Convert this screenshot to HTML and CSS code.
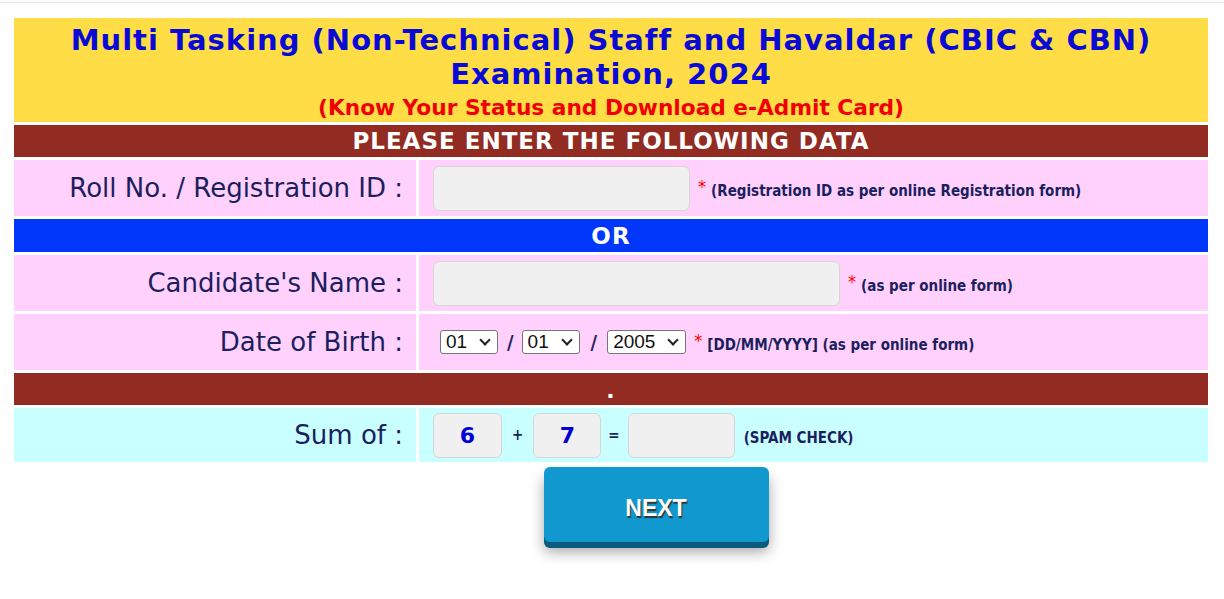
FILE: index.html
```html
<!DOCTYPE html>
<html>
<head>
<meta charset="utf-8">
<link rel="stylesheet" href="styles.css">
</head>
<body>
<div class="topline"></div>
<table class="form">
  <tr>
    <td colspan="2" class="head">
      <div class="title">Multi Tasking (Non-Technical) Staff and Havaldar (CBIC &amp; CBN)<br>Examination, 2024</div>
      <div class="sub">(Know Your Status and Download e-Admit Card)</div>
    </td>
  </tr>
  <tr><td colspan="2" class="bar brown">PLEASE ENTER THE FOLLOWING DATA</td></tr>
  <tr class="pink">
    <td class="label">Roll No. / Registration ID :</td>
    <td class="field"><span class="input w1"></span><span class="star">*</span><span class="hint">(Registration ID as per online Registration form)</span></td>
  </tr>
  <tr><td colspan="2" class="bar blue">OR</td></tr>
  <tr class="pink">
    <td class="label">Candidate's Name :</td>
    <td class="field"><span class="input w2"></span><span class="star">*</span><span class="hint">(as per online form)</span></td>
  </tr>
  <tr class="pink dob">
    <td class="label">Date of Birth :</td>
    <td class="field"><span class="sel s2">01</span><span class="slash">/</span><span class="sel s2">01</span><span class="slash sl2">/</span><span class="sel s4">2005</span><span class="star">*</span><span class="hint">[DD/MM/YYYY] (as per online form)</span></td>
  </tr>
  <tr><td colspan="2" class="bar brown dot">.</td></tr>
  <tr class="cyan">
    <td class="label">Sum of :</td>
    <td class="field"><span class="input num">6</span><span class="op">+</span><span class="input num n2">7</span><span class="op eq">=</span><span class="input w3"></span><span class="hint spam">(SPAM CHECK)</span></td>
  </tr>
</table>
<div class="btnwrap"><button class="next">NEXT</button></div>
</body>
</html>
```
FILE: styles.css
```css
html, body { margin: 0; padding: 0; background: #fff; }
body { font-family: "DejaVu Sans", sans-serif; }
.topline { height: 2px; border-bottom: 1px solid #e4e4e4; }
.form {
  border-collapse: separate;
  border-spacing: 3px;
  width: 1200px;
  margin: 12px 0 0 11px;
}
.form td { padding: 0; }
.head {
  background: #fedd46;
  text-align: center;
  height: 104px;
  vertical-align: top;
}
.title {
  color: #0a0ad6;
  font-weight: bold;
  font-size: 29px;
  letter-spacing: 1px;
  line-height: 34px;
  padding-top: 5px;
}
.sub {
  color: #f00000;
  font-weight: bold;
  font-size: 21.7px;
  line-height: 28px;
  margin-top: 3px;
}
.bar {
  color: #fff;
  font-weight: bold;
  font-size: 23px;
  letter-spacing: 1px;
  text-align: center;
  height: 32px;
  line-height: 32px;
}
.brown { background: #922b22; }
.blue { background: #0037fb; height: 33px; }
.dot { height: 32px; line-height: 28px; font-size: 22px; vertical-align: bottom; }
.pink td { background: #ffd1fc; height: 56px; }
.dob td { height: 56px; }
.cyan td { background: #caffff; height: 54px; }
.label {
  width: 402px;
  text-align: right;
  color: #1b1f5e;
  font-size: 26px;
  padding-right: 13px !important;
  box-sizing: border-box;
}
.field {
  padding-left: 14px !important;
  font-family: "DejaVu Sans Condensed", "DejaVu Sans", sans-serif;
  font-size: 15px;
  color: #1b1f5e;
  white-space: nowrap;
}
.field > span { display: inline-block; vertical-align: middle; }
.input {
  background: #f0f0f0;
  border: 1px solid #d6d6d6;
  border-radius: 6px;
  box-sizing: border-box;
  height: 45px;
}
.w1 { width: 257px; }
.w2 { width: 407px; }
.w3 { width: 107px; }
.num {
  width: 69px;
  text-align: center;
  color: #0000d8;
  font-family: "DejaVu Sans", sans-serif;
  font-weight: bold;
  font-size: 22px;
  line-height: 43px;
}
.star { color: #f00; font-size: 18px; margin: 0 5px 0 8px; padding-bottom: 4px; }
.hint { font-weight: bold; font-size: 15px; padding-top: 5px; }
.sel {
  font-family: "Liberation Sans", Arial, sans-serif;
  font-size: 19px;
  color: #111;
  background: #fff;
  border: 1px solid #767676;
  border-radius: 3px;
  height: 24px;
  line-height: 22px;
  box-sizing: border-box;
  padding-left: 5px;
  position: relative;
}
.sel::after {
  content: "";
  position: absolute;
  right: 8px;
  top: 5px;
  width: 6px;
  height: 6px;
  border-right: 2px solid #222;
  border-bottom: 2px solid #222;
  transform: rotate(45deg);
}
.s2 { width: 58px; }
.dob .field > .sel:first-child { margin-left: 7px; }
.s4 { width: 79px; }
.slash { font-weight: bold; font-size: 20px; margin: 0 8px 0 9px; color: #1b1f5e; }
.sl2 { margin: 0 10px 0 11px; }
.dob .star { margin-left: 8px; }
.op { font-weight: bold; font-size: 15px; margin: 0 10px; }
.eq { margin: 0 8px 0 7px; }
.n2 { width: 68px; }
.spam { margin-left: 9px; }
.btnwrap { text-align: center; padding: 2px 0 50px 88px; }
.next {
  width: 225px;
  height: 75px;
  background: #1199cf;
  border: none;
  border-radius: 6px;
  box-shadow: 0 6px 0 #0b5b7c, 0 10px 14px rgba(0,0,0,0.35);
  color: #fff;
  font-family: "Liberation Sans", Arial, sans-serif;
  font-weight: bold;
  font-size: 23px;
  text-shadow: 1px 2px 1px #333;
  padding: 8px 0 0 0;
}
```
